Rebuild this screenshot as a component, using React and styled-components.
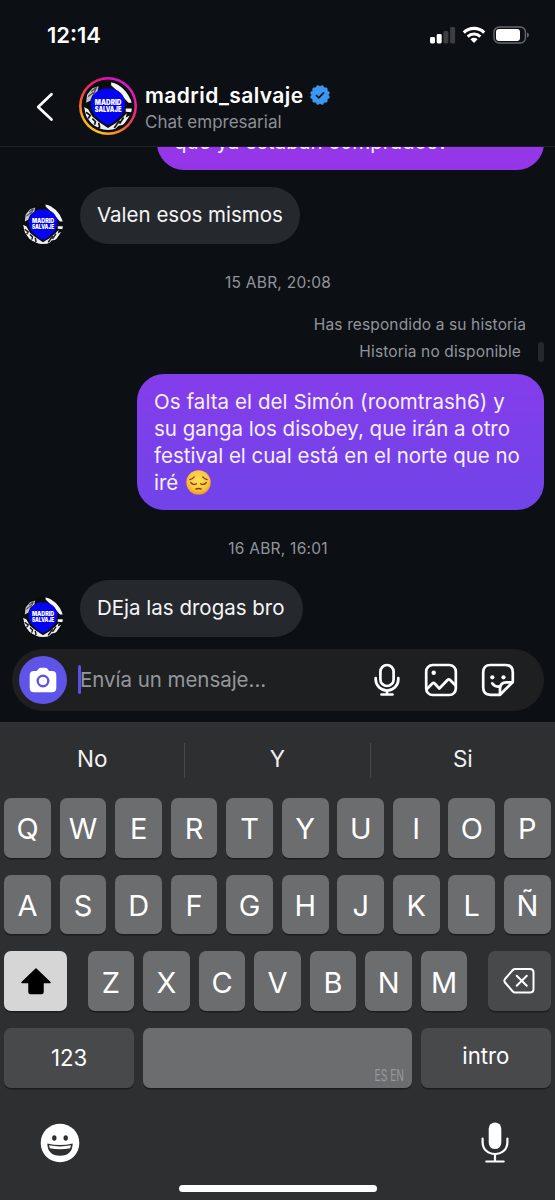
import React from "react";
import styled, { createGlobalStyle } from "styled-components";

const GlobalStyle = createGlobalStyle`
  * { box-sizing: border-box; }
  body { margin: 0; background: #0c0f14; }
`;

const Screen = styled.div`
  width: 555px;
  height: 1200px;
  display: flex;
  flex-direction: column;
  overflow: hidden;
  background: #0c0f14;
  color: #fff;
  font-family: Inter, "Liberation Sans", sans-serif;
`;

const StatusBar = styled.div`
  height: 70px;
  flex: none;
  display: flex;
  justify-content: space-between;
  padding: 22px 25px 0 47px;
`;

const Clock = styled.div`
  font-size: 22px;
  line-height: 27px;
  font-weight: 600;
`;

const StatusIcons = styled.div`
  display: flex;
  padding-top: 4px;
  svg { display: block; }
`;

const Header = styled.header`
  height: 77px;
  flex: none;
  display: flex;
  border-bottom: 1px solid #1d2025;
  padding-left: 36px;
`;

const BackIcon = styled.svg`
  width: 18px;
  height: 30px;
  margin-top: 22px;
  flex: none;
`;

const StoryRing = styled.div`
  width: 58px;
  height: 58px;
  flex: none;
  margin: 7px 8px 0 25px;
  border-radius: 50%;
  display: flex;
  align-items: center;
  justify-content: center;
  background:
    radial-gradient(circle, #0c0f14 0 26px, transparent 26.8px),
    conic-gradient(from 0deg, #e010c0, #d81ac8 45deg, #f0208a 90deg, #ee3a55 125deg, #f98a1e 160deg, #ffc01e 200deg, #ffae1e 240deg, #f96a30 275deg, #f0304a 310deg, #ea1880 340deg, #e010c0);
`;

const Names = styled.div`
  display: flex;
  flex-direction: column;
  padding-top: 12px;
`;

const UserName = styled.div`
  display: flex;
  align-items: center;
  gap: 6px;
  font-size: 21px;
  line-height: 27px;
  height: 27px;
  font-weight: 600;
  white-space: nowrap;
  letter-spacing: 0.42px;
  svg { display: block; margin-top: -2px; }
`;

const SubTitle = styled.div`
  font-size: 17px;
  line-height: 26px;
  color: #8d9097;
  white-space: nowrap;
`;

const Chat = styled.main`
  height: 575px;
  flex: none;
  display: flex;
  flex-direction: column;
  justify-content: flex-end;
  overflow: hidden;
  padding: 0 11px 11px 12px;
`;

const Incoming = styled.div`
  display: flex;
  align-items: flex-end;
  gap: 17px;
  padding-left: 11px;
  margin-top: ${(p) => p.$gap}px;
`;

const Bubble = styled.div`
  font-size: 20.5px;
  line-height: 27px;
  white-space: nowrap;
  flex: none;
`;

const GreyBubble = styled(Bubble)`
  width: ${(p) => p.$width}px;
  height: 57px;
  padding: 14px 17px;
  border-radius: 28.5px;
  background: #25282d;
  color: #f5f5f7;
`;

const SentBubble = styled(Bubble)`
  align-self: flex-end;
  width: ${(p) => p.$width}px;
  height: ${(p) => p.$height}px;
  margin-top: ${(p) => p.$gap || 0}px;
  padding: 14px 17px 0;
  border-radius: 27px;
  background: linear-gradient(${(p) => p.$from}, ${(p) => p.$to});
  color: #f6effe;
`;

const Line = styled.div`
  height: 27px;
  letter-spacing: ${(p) => p.$spacing || 0}px;
  svg { vertical-align: -5px; margin-left: 2px; }
`;

const DateStamp = styled.div`
  height: 20px;
  line-height: 20px;
  margin-top: ${(p) => p.$gap}px;
  text-align: center;
  font-size: 15.5px;
  letter-spacing: 0.25px;
  color: #92959b;
`;

const StoryNote = styled.div`
  display: flex;
  justify-content: flex-end;
  height: 22px;
  line-height: 22px;
  margin-top: ${(p) => p.$gap}px;
  padding-right: ${(p) => p.$right}px;
  font-size: 15.5px;
  letter-spacing: 0.13px;
  color: #92959b;
`;

const StoryBar = styled.span`
  width: 6px;
  height: 20px;
  margin: 1px 0 0 17px;
  border-radius: 3px;
  background: #25282d;
`;

const Composer = styled.div`
  height: 62px;
  flex: none;
  margin-top: 12px;
  border-radius: 31px;
  background: #1e1f21;
  display: flex;
  align-items: center;
  padding: 0 29px 0 7px;
`;

const CameraButton = styled.div`
  width: 48px;
  height: 48px;
  border-radius: 50%;
  background: #5e55e8;
  display: flex;
  align-items: center;
  justify-content: center;
`;

const Caret = styled.span`
  width: 3px;
  height: 29px;
  margin: 0 -1px 2px 11px;
  border-radius: 1.5px;
  background: #5b50e4;
`;

const Placeholder = styled.span`
  flex: 1;
  font-size: 20.5px;
  line-height: 27px;
  padding-bottom: 1px;
  color: #94979c;
  letter-spacing: -0.04px;
`;

const ComposerIcons = styled.div`
  display: flex;
  align-items: center;
  gap: 23px;
  svg { display: block; }
  svg:first-child { margin-right: 1px; }
`;

const Keyboard = styled.section`
  height: 478px;
  flex: none;
  background: #2e2f31;
  border-top: 1px solid #333436;
  padding: 0 4.2px;
  display: flex;
  flex-direction: column;
`;

const Suggestions = styled.div`
  height: 75px;
  flex: none;
  margin: 0 -4.2px;
  display: flex;
  align-items: center;
`;

const Suggestion = styled.div`
  flex: 1;
  height: 35px;
  line-height: 32px;
  text-align: center;
  font-size: 22.5px;
  color: #f1f1f2;
  & + & { border-left: 1px solid #47484a; }
`;

const KeyRow = styled.div`
  display: flex;
  justify-content: space-between;
  height: 59.5px;
  flex: none;
  margin-bottom: 17.2px;
`;

const LetterGroup = styled.div`
  display: flex;
  gap: 8.85px;
`;

const Key = styled.div`
  width: ${(p) => p.$width || 46.7}px;
  height: 59.5px;
  border-radius: 7px;
  background: ${(p) => (p.$tone === "dark" ? "#48494b" : p.$tone === "light" ? "#d6d6d6" : "#6c6d6f")};
  box-shadow: 0 1.5px 0 #1c1d1e;
  display: flex;
  align-items: center;
  justify-content: center;
  font-size: 29px;
  font-weight: 400;
  line-height: 1;
  padding-top: 2px;
`;

const FunctionKey = styled(Key)`
  font-size: 22.2px;
  padding: 0 0 ${(p) => p.$lift || 0}px;
`;

const SpaceKey = styled(Key)`
  justify-content: flex-end;
  align-items: flex-end;
  padding: 0 8px 4px;
`;

const Languages = styled.span`
  font-size: 16px;
  line-height: 18px;
  color: #98999b;
  white-space: nowrap;
  transform: scaleX(0.64);
  transform-origin: right center;
`;

const BottomRow = styled.div`
  display: flex;
  justify-content: space-between;
  padding: 17px 42px 0 36.3px;
  height: 80px;
  svg { display: block; }
  svg:first-child { margin-top: 1px; }
`;

const HomeIndicator = styled.div`
  width: 198px;
  height: 7.5px;
  border-radius: 4px;
  background: #fff;
  align-self: center;
`;

const AvatarArt = styled.svg`
  flex: none;
  display: block;
`;

function Avatar({ size }) {
  const id = React.useId();
  return (
    <AvatarArt width={size} height={size} viewBox="0 0 46 46">
      <clipPath id={id}><circle cx="23" cy="23" r="23" /></clipPath>
      <g clipPath={`url(#${id})`}>
        <rect width="46" height="46" fill="#0b0c0d" />
        <path d="M26 0 Q40 4 46 20 L42.5 20 Q36 12 26 3Z M40 25.5 L46 25.5 L46 29 L40 28.5Z" fill="#f5f5f5" />
        <path d="M3 12 L8 6 L14 4 L13 9 L8 13 L6 18 L2 20Z" fill="#c4c5c7" />
        <path d="M7 9 L11 6 M4 14 L9 10 M12 5 L9 12" stroke="#44474c" strokeWidth="1.2" />
        <path d="M0 24 L4 26 L8 33 L14 38 L23 44 L31 39 L37 34 L41 30 L40 34 L44 32 L38 41 L33 42 L29 46 L18 46 L8 41 L2 33Z" fill="#efefef" />
        <path d="M2 29 L6 32 L4 35 M8 35 L11 38 L10 41 M14 39 L15 43 L13 45 M38 34 L34 40 M34 37 L29 44" stroke="#111" strokeWidth="1.6" fill="none" />
        <path d="M23 6 C33 6 39.5 12.5 39.5 21 C39.5 29 35 33 31 36.5 C27 40 25 41 23 41 C21 41 19 40 15 36.5 C11 33 6.5 29 6.5 21 C6.5 12.5 13 6 23 6Z" fill="#0404f0" />
        <g fill="#fff" fontFamily="Inter, sans-serif" fontWeight="900" fontSize="7.3">
          <text x="10.3" y="22.2" textLength="25.6" lengthAdjust="spacingAndGlyphs">MADRID</text>
          <text x="10.3" y="28.7" textLength="25.6" lengthAdjust="spacingAndGlyphs">SALVAJE</text>
        </g>
      </g>
    </AvatarArt>
  );
}

function VerifiedBadge() {
  const points = [];
  for (let i = 0; i < 24; i++) {
    const r = i % 2 ? 8.4 : 10;
    const a = ((i + 1) * Math.PI) / 12;
    points.push(`${(10 + r * Math.sin(a)).toFixed(2)},${(10 - r * Math.cos(a)).toFixed(2)}`);
  }
  return (
    <svg width="20" height="20" viewBox="0 0 20 20">
      <polygon points={points.join(" ")} fill="#3b97f2" stroke="#3b97f2" strokeWidth=".6" strokeLinejoin="round" />
      <path d="M6 10.2 L8.8 12.8 L14 7.4" fill="none" stroke="#0c1420" strokeWidth="1.7" />
    </svg>
  );
}

function PensiveFace() {
  return (
    <svg width="25" height="25" viewBox="0 0 25 25">
      <defs>
        <radialGradient id="face" cx=".5" cy=".4" r=".6">
          <stop offset="0" stopColor="#ffe05a" />
          <stop offset=".7" stopColor="#fdc43a" />
          <stop offset="1" stopColor="#ef9428" />
        </radialGradient>
      </defs>
      <circle cx="12.5" cy="12.5" r="12.2" fill="url(#face)" />
      <g fill="none" stroke="#74451a" strokeWidth="1.2" strokeLinecap="round">
        <path d="M3.8 9.6 Q6.6 9.1 8.2 6.8 M21.2 9.6 Q18.4 9.1 16.8 6.8" />
        <path d="M4.7 12.5 Q7.3 15.7 10.4 13.7 M20.3 12.5 Q17.7 15.7 14.6 13.7" />
        <path d="M10 19 Q12.5 18 15 19" strokeWidth="1.5" />
      </g>
    </svg>
  );
}

function Letters({ keys }) {
  return <LetterGroup>{[...keys].map((k) => <Key key={k}>{k}</Key>)}</LetterGroup>;
}

export default function App() {
  return (
    <Screen>
      <GlobalStyle />
      <StatusBar>
        <Clock>12:14</Clock>
        <StatusIcons>
          <svg width="100" height="20" viewBox="0 0 100 20">
            <g fill="#fff">
              <rect x="0" y="11" width="5" height="6.5" rx="1.4" />
              <rect x="6.7" y="8" width="5" height="9.5" rx="1.4" />
              <g fill="#3c3e42">
                <rect x="13.4" y="5" width="5" height="12.5" rx="1.4" />
                <rect x="20.1" y="1" width="5" height="16.5" rx="1.4" />
              </g>
            </g>
            <g fill="none" stroke="#fff" strokeWidth="3.1">
              <path d="M33.8 6.6 A14.5 14.5 0 0 1 54.2 6.6" />
              <path d="M37.7 10.6 A9 9 0 0 1 50.3 10.6" />
            </g>
            <path d="M40.4 13.2 A5.2 5.2 0 0 1 47.6 13.2 L44 17.1Z" fill="#fff" />
            <rect x="64" y="1" width="31.4" height="16" rx="5" fill="none" stroke="#66686c" strokeWidth="1.4" />
            <rect x="66" y="3" width="24" height="12" rx="3" fill="#fff" />
            <path d="M97 6.5 Q99 7.2 99 9 Q99 10.8 97 11.5Z" fill="#66686c" />
          </svg>
        </StatusIcons>
      </StatusBar>

      <Header>
        <BackIcon viewBox="0 0 18 30">
          <path d="M15.5 2.2 L2.2 15 L15.5 27.5" fill="none" stroke="#fff" strokeWidth="2.7" strokeLinecap="round" strokeLinejoin="round" />
        </BackIcon>
        <StoryRing><Avatar size={48} /></StoryRing>
        <Names>
          <UserName>madrid_salvaje <VerifiedBadge /></UserName>
          <SubTitle>Chat empresarial</SubTitle>
        </Names>
      </Header>

      <Chat>
        <SentBubble $width={387} $height={56} $from="#9a36ec" $to="#9436e8">
          <Line>que ya estaban comprados?</Line>
        </SentBubble>
        <Incoming $gap={17}>
          <Avatar size={40} />
          <GreyBubble $width={220}>Valen esos mismos</GreyBubble>
        </Incoming>
        <DateStamp $gap={29}>15 ABR, 20:08</DateStamp>
        <StoryNote $gap={21} $right={18}>Has respondido a su historia</StoryNote>
        <StoryNote $gap={5} $right={0}>Historia no disponible<StoryBar /></StoryNote>
        <SentBubble $width={407} $height={136} $gap={11} $from="#843dea" $to="#7044e8">
          <Line $spacing={0.07}>Os falta el del Simón (roomtrash6) y</Line>
          <Line>su ganga los disobey, que irán a otro</Line>
          <Line $spacing={-0.02}>festival el cual está en el norte que no</Line>
          <Line>iré <PensiveFace /></Line>
        </SentBubble>
        <DateStamp $gap={29}>16 ABR, 16:01</DateStamp>
        <Incoming $gap={21}>
          <Avatar size={40} />
          <GreyBubble $width={223}>DEja las drogas bro</GreyBubble>
        </Incoming>
        <Composer>
          <CameraButton>
            <svg width="28" height="26" viewBox="0 0 28 26">
              <path d="M5 4 H7 Q8.2 4 9 2.5 Q9.8 .8 11.5 .8 H16.5 Q18.2 .8 19 2.5 Q19.8 4 21 4 H23 Q27.3 4 27.3 8.3 V21 Q27.3 25.2 23 25.2 H5 Q.7 25.2 .7 21 V8.3 Q.7 4 5 4Z" fill="#fff" />
              <circle cx="14" cy="14" r="5.3" fill="#fff" stroke="#5e55e8" strokeWidth="2.4" />
            </svg>
          </CameraButton>
          <Caret />
          <Placeholder>Envía un mensaje...</Placeholder>
          <ComposerIcons>
            <svg width="26" height="34" viewBox="0 0 26 34" fill="none" stroke="#fff" strokeWidth="2.7" strokeLinecap="round">
              <rect x="6.4" y="2" width="13.2" height="21" rx="6.6" />
              <path d="M1.7 15 V16.5 A11.3 11 0 0 0 24.3 16.5 V15 M13 27.5 V31 M7.5 31.5 H18.5" />
            </svg>
            <svg width="34" height="34" viewBox="0 0 34 34" fill="none" stroke="#fff" strokeWidth="2.7" strokeLinecap="round" strokeLinejoin="round">
              <rect x="2.2" y="2" width="29.6" height="30" rx="6.5" />
              <path d="M2.5 26.5 L8.3 20.5 Q9.5 19.5 10.7 20.5 L15.3 25.5 L23.5 17 Q24.8 15.8 26.1 17 L31.5 22.5" />
              <circle cx="9.7" cy="9.7" r="2.2" fill="#fff" stroke="none" />
            </svg>
            <svg width="34" height="34" viewBox="0 0 34 34" fill="none" stroke="#fff" strokeWidth="2.7" strokeLinecap="round" strokeLinejoin="round">
              <path d="M19 31.8 H9.5 Q2.2 31.8 2.2 24.5 V9.5 Q2.2 2 9.5 2 H24.5 Q31.8 2 31.8 9.5 V19 Z" />
              <path d="M19 31.5 V26 Q19 19.3 25.5 19.3 H31.5" />
              <path d="M11.2 20.3 Q14 24.3 18.3 23.4" />
              <circle cx="11.3" cy="14.3" r="2.1" fill="#fff" stroke="none" />
              <circle cx="22.5" cy="14.3" r="2.1" fill="#fff" stroke="none" />
            </svg>
          </ComposerIcons>
        </Composer>
      </Chat>

      <Keyboard>
        <Suggestions>
          <Suggestion>No</Suggestion>
          <Suggestion>Y</Suggestion>
          <Suggestion>Si</Suggestion>
        </Suggestions>
        <KeyRow><Letters keys="QWERTYUIOP" /></KeyRow>
        <KeyRow><Letters keys="ASDFGHJKLÑ" /></KeyRow>
        <KeyRow>
          <FunctionKey $width={62.8} $tone="light">
            <svg width="32" height="28" viewBox="0 0 32 28">
              <path d="M16 2 L30 15.5 H23 V25 Q23 26.5 21.5 26.5 H10.5 Q9 26.5 9 25 V15.5 H2Z" fill="#000" stroke="#000" strokeWidth="1.5" strokeLinejoin="round" />
            </svg>
          </FunctionKey>
          <Letters keys="ZXCVBNM" />
          <FunctionKey $width={62.8} $tone="dark">
            <svg width="32" height="26" viewBox="0 0 32 26" fill="none" stroke="#fff" strokeWidth="2" strokeLinecap="round" strokeLinejoin="round">
              <path d="M12 1 H27 Q30.5 1 30.5 4.5 V21 Q30.5 24.5 27 24.5 H12 Q10.8 24.5 9.8 23.5 L2 14.5 Q.7 12.8 2 11 L9.8 2 Q10.8 1 12 1Z" />
              <path d="M13.7 7.7 L23.8 17.8 M23.8 7.7 L13.7 17.8" />
            </svg>
          </FunctionKey>
        </KeyRow>
        <KeyRow>
          <FunctionKey $width={130} $tone="dark">123</FunctionKey>
          <SpaceKey $width={269.5}><Languages>ES EN</Languages></SpaceKey>
          <FunctionKey $width={130} $tone="dark" $lift={3}>intro</FunctionKey>
        </KeyRow>
        <BottomRow>
          <svg width="40" height="40" viewBox="0 0 40 40">
            <circle cx="20" cy="20" r="19.3" fill="#fff" />
            <ellipse cx="14.3" cy="15" rx="2.2" ry="2.8" fill="#2e2f31" />
            <ellipse cx="25.7" cy="15" rx="2.2" ry="2.8" fill="#2e2f31" />
            <path d="M7.3 20.5 Q20 23.5 32.7 20.5 Q32.5 32.5 20 32.8 Q7.5 32.5 7.3 20.5Z" fill="#2e2f31" />
            <path d="M9 22.3 Q20 24.6 31 22.3 L30.2 25.2 Q20 27.3 9.8 25.2Z" fill="#fff" />
          </svg>
          <svg width="28" height="42" viewBox="0 0 28 42" fill="none" stroke="#fff" strokeWidth="2.2" strokeLinecap="round">
            <rect x="7.7" y="0.5" width="12.6" height="26.5" rx="6.3" fill="#fff" stroke="none" />
            <path d="M1.6 16.5 V20 C1.6 27.5 7 32 14 32 C21 32 26.4 27.5 26.4 20 V16.5 M14 32 V39 M5.3 39.5 H22.7" />
          </svg>
        </BottomRow>
        <HomeIndicator />
      </Keyboard>
    </Screen>
  );
}
